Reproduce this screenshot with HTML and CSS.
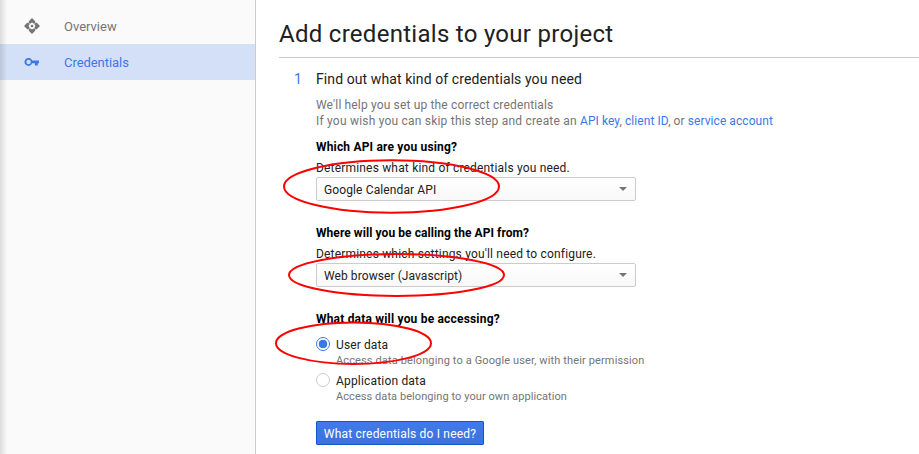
FILE: index.html
```html
<!DOCTYPE html>
<html lang="en">
<head>
<meta charset="utf-8">
<title>Add credentials</title>
<link rel="stylesheet" href="styles.css">
</head>
<body>
<div class="app">
  <nav class="sidebar">
    <a class="nav-item">
      <svg class="nav-icon" viewBox="0 0 16 16"><path d="M8 0L11.200 3.200V4.600L10 5.700L8 4.600L6 5.700L4.800 4.600V3.200zM8 16L4.800 12.800V11.400L6 10.300L8 11.400L10 10.300L11.200 11.400V12.800zM0 8L3.200 4.800H4.600L5.700 6L4.600 8L5.700 10L4.600 11.200H3.200zM16 8L12.800 11.200H11.400L10.300 10L11.400 8L10.300 6L11.400 4.800H12.800z"/><circle cx="8" cy="8" r="1.300"/></svg>
      <span class="nav-overview">Overview</span>
    </a>
    <a class="nav-item active">
      <svg class="nav-icon" viewBox="0 0 16 16"><path fill-rule="evenodd" d="M8.200 6.500H15V9.300H13.800V11.500H10.900V9.300H8.200A4 4 0 1 1 8.200 6.500zM4.600 5.800a2.200 2.200 0 1 0 0 4.400a2.200 2.200 0 1 0 0-4.400z"/></svg>
      <span class="nav-credentials">Credentials</span>
    </a>
  </nav>
  <main class="content">
    <h1>Add credentials to your project</h1>
    <section class="step">
      <div class="step-number">1</div>
      <div class="step-body">
        <h2>Find out what kind of credentials you need</h2>
        <p class="intro">We'll help you set up the correct credentials<br><span class="skip">If you wish you can skip this step and create an </span><span class="links"><a>API key</a>, <a>client ID</a>, or <a>service account</a></span></p>
        <div class="field">
          <h3 class="q-api">Which API are you using?</h3>
          <p class="hint">Determines what kind of credentials you need.</p>
          <div class="select"><span class="value-api">Google Calendar API</span><i class="caret"></i></div>
        </div>
        <div class="field">
          <h3 class="q-from">Where will you be calling the API from?</h3>
          <p class="hint">Determines which settings you'll need to configure.</p>
          <div class="select"><span class="value-from">Web browser (Javascript)</span><i class="caret"></i></div>
        </div>
        <div class="field-data">
          <h3 class="q-data">What data will you be accessing?</h3>
          <div class="option"><i class="radio checked"></i><div><p class="option-name name-user">User data</p><p class="option-hint hint-user">Access data belonging to a Google user, with their permission</p></div></div>
          <div class="option"><i class="radio"></i><div><p class="option-name name-app">Application data</p><p class="option-hint hint-app">Access data belonging to your own application</p></div></div>
        </div>
        <button>What credentials do I need?</button>
      </div>
    </section>
  </main>
  <svg class="annotations" viewBox="0 0 919 454">
    <ellipse cx="391.500" cy="186.500" rx="107.500" ry="26.200"/>
    <ellipse cx="396.500" cy="275" rx="107.500" ry="21"/>
    <ellipse cx="353.500" cy="343.200" rx="77.500" ry="20.800"/>
  </svg>
</div>
</body>
</html>
```
FILE: styles.css
```css
* { box-sizing: border-box; }
body { margin: 0; background: #fff; font: 12px/16px Roboto, sans-serif; color: #212121; overflow: hidden; }
h1, h2, h3, p { margin: 0; font-weight: 400; white-space: nowrap; }
a { color: #3b78e7; }
.app { position: relative; display: flex; width: 919px; height: 454px; overflow: hidden; }
.sidebar { position: relative; width: 256px; flex: none; padding-top: 8px; background: #fafafa; border-right: 1px solid #ccc; }
.sidebar::before { content: ""; position: absolute; left: 0; top: 0; width: 7px; height: 100%; background: linear-gradient(90deg, rgba(0,0,0,.12), transparent); z-index: 1; }
.nav-item { display: flex; align-items: center; gap: 24px; height: 36px; padding-left: 24px; font-size: 13px; color: #757575; }
.nav-item span { padding-top: 2px; }
.nav-credentials { letter-spacing: -.05px; }
.nav-item.active { background: #d4e0f7; color: #3b78e7; }
.nav-icon { width: 16px; height: 16px; fill: currentColor; }
.content { flex: 1; padding-left: 23px; }
h1 { height: 58px; padding-top: 18px; border-bottom: 1px solid #ccc; font-size: 24px; line-height: 32px; letter-spacing: .28px; }
.step { display: flex; padding: 11px 0 0 15px; }
.step-number { width: 22px; font-size: 14px; line-height: 20px; color: #3b78e7; }
h2 { font-size: 14px; line-height: 20px; letter-spacing: .09px; }
.intro { margin: 8px 0 10px; color: #757575; letter-spacing: .155px; }
.skip { letter-spacing: .21px; }
.links { letter-spacing: .07px; }
.field { height: 86px; }
h3 { font-size: 12px; font-weight: 700; line-height: 16px; color: #000; }
.q-api { letter-spacing: .18px; }
.q-from { letter-spacing: .07px; }
.hint { margin: 5px 0 1px; letter-spacing: .18px; }
.value-api { letter-spacing: .12px; }
.value-from { letter-spacing: .08px; }
.select { display: flex; align-items: center; justify-content: space-between; width: 320px; height: 24px; padding: 1px 8px 0 7px; border: 1px solid #ccc; border-radius: 2px; background: linear-gradient(#fff, #f8f8f8); }
.caret { border: 4px solid transparent; border-top-color: #757575; border-bottom: 0; margin-top: -1px; }
.field-data { height: 110px; }
.q-data { margin-bottom: 9px; letter-spacing: .19px; }
.option { display: flex; gap: 6px; height: 36px; }
.option-name { padding-top: 1px; }
.name-user { letter-spacing: .11px; }
.name-app { letter-spacing: .18px; }
.radio { width: 14px; height: 14px; margin-top: 1px; border: 1px solid #ccc; border-radius: 50%; }
.radio.checked { border-color: #3b78e7; background: radial-gradient(circle, #3b78e7 4px, #fff 4.600px); }
.option-hint { font-size: 11px; color: #757575; }
.hint-user { letter-spacing: .13px; }
.hint-app { letter-spacing: .07px; }
button { display: block; width: 168px; height: 24px; padding: 1px 0 0; border: 1px solid #1455cc; border-radius: 1px; background: linear-gradient(#3f7bea, #3b72df); color: #fff; font: 12px/20px Roboto, sans-serif; letter-spacing: .19px; white-space: nowrap; }
.annotations { position: absolute; inset: 0; width: 919px; height: 454px; fill: none; stroke: #f00; stroke-width: 2; }
```
